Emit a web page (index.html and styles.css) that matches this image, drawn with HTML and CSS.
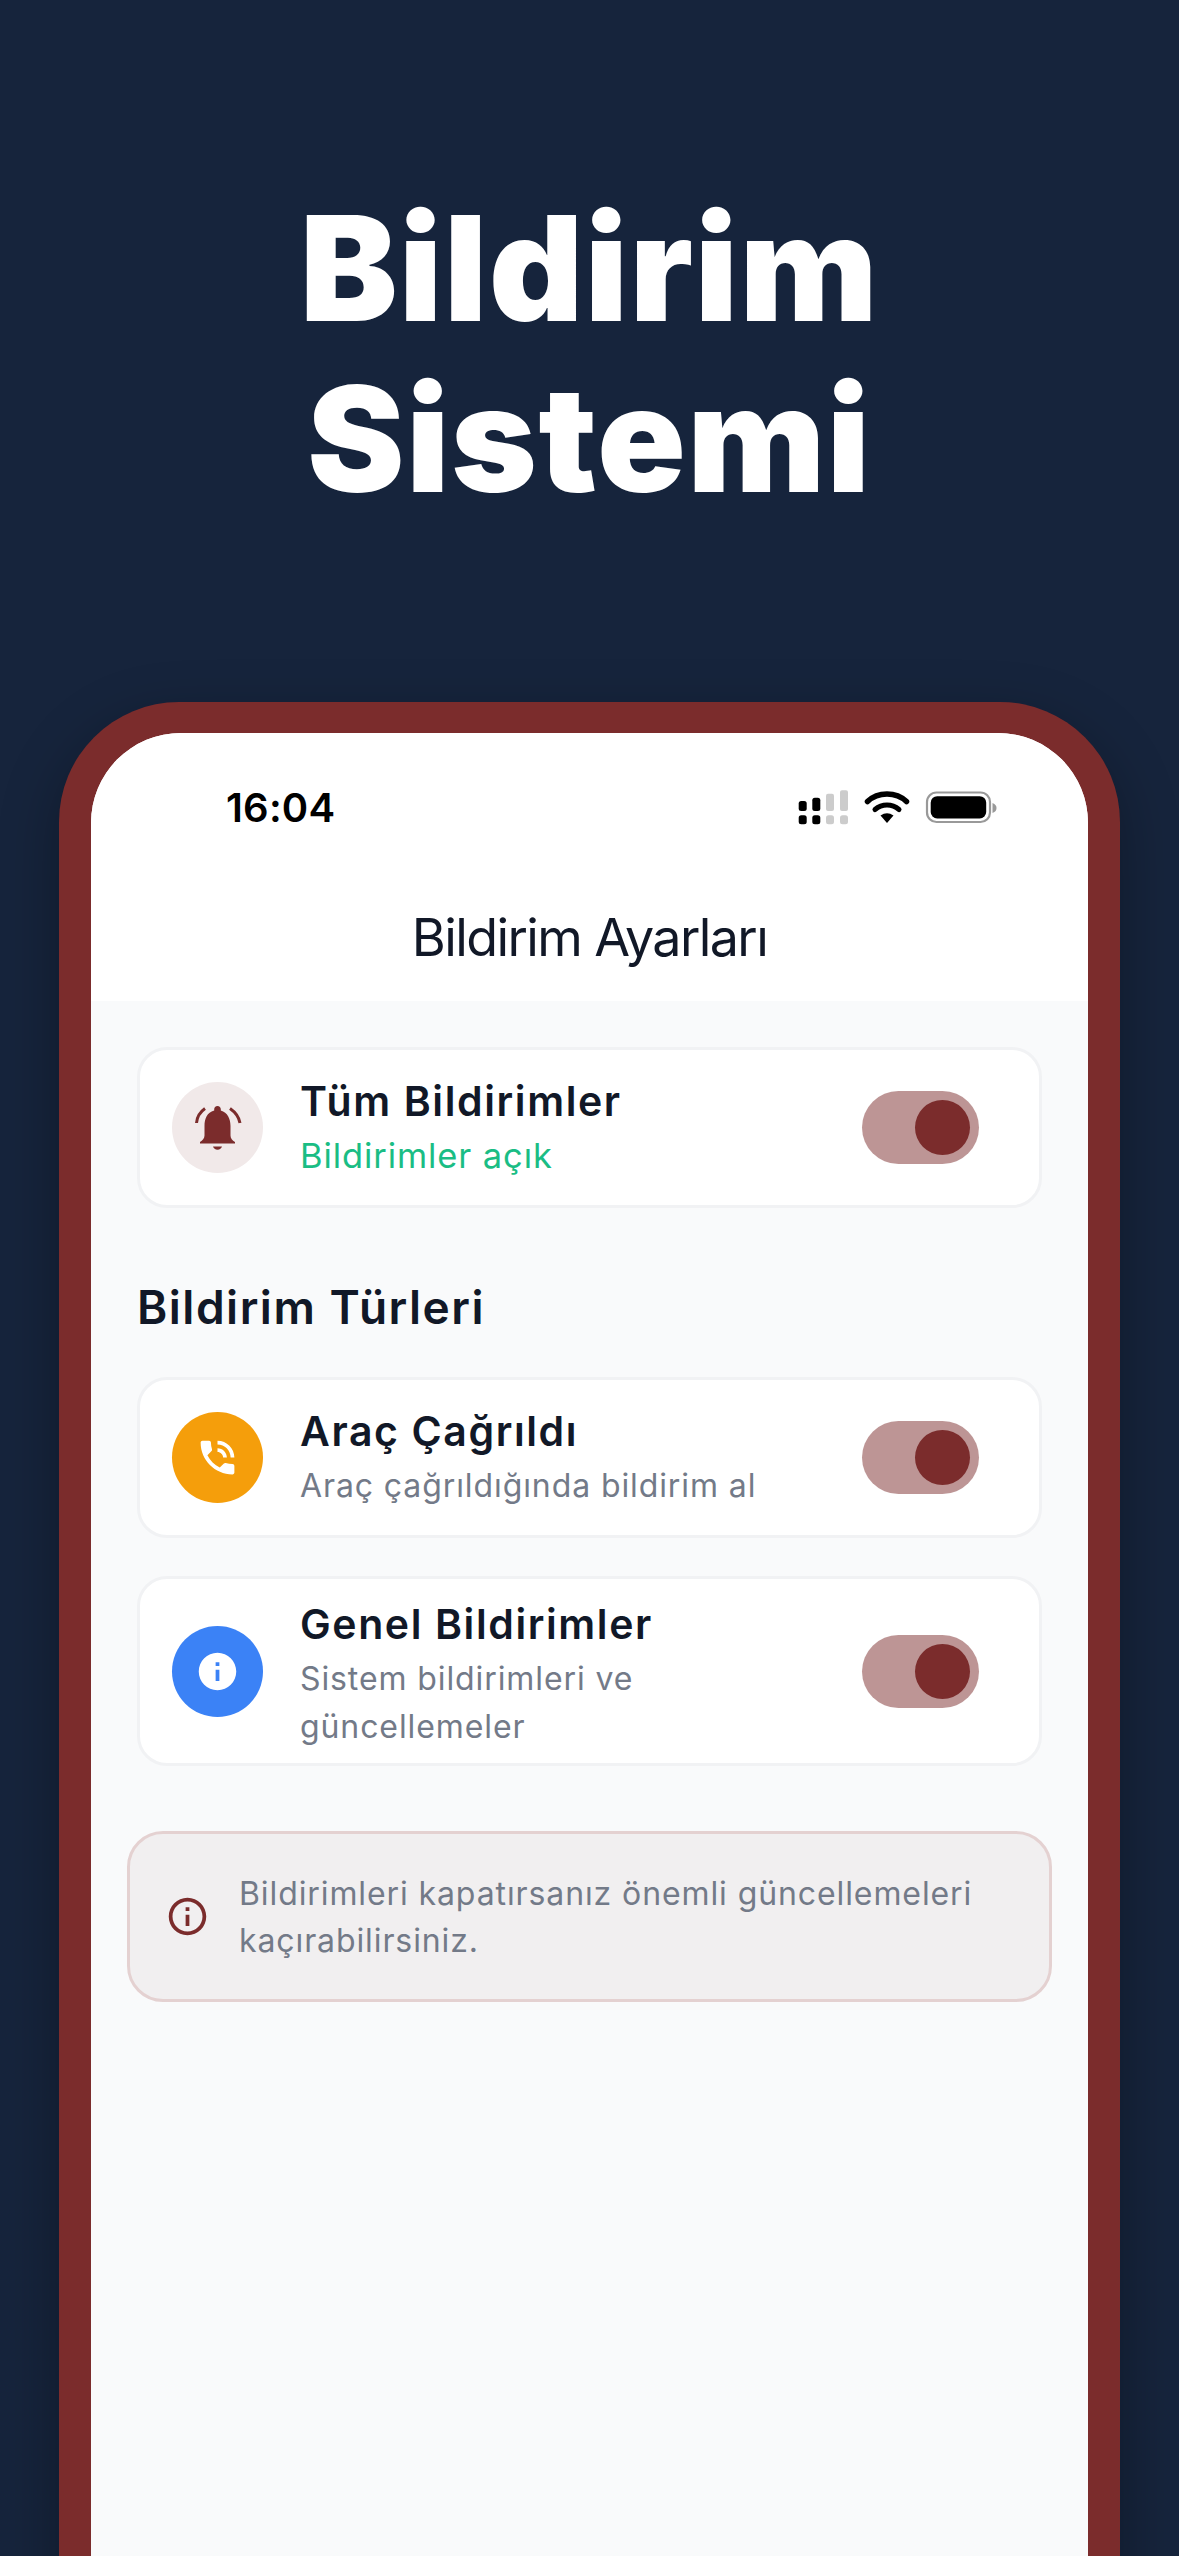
FILE: index.html
```html
<!DOCTYPE html>
<html lang="tr">
<head>
    <meta charset="UTF-8">
    <meta name="viewport" content="width=device-width, initial-scale=1.0">
    <title>Bildirim Sistemi</title>
    <link rel="stylesheet" href="styles.css">
</head>
<body>
    <div class="page">
        <h1 class="headline">Bildirim<br>Sistemi</h1>

        <div class="phone">
            <div class="screen">
                <div class="status-bar">
                    <span class="status-time">16:04</span>
                    <svg class="status-icons" width="260" height="70" viewBox="0 0 260 70">
                        <rect x="38.7" y="30" width="8" height="10" rx="2.5"/>
                        <rect x="52.3" y="26.7" width="8" height="13.3" rx="2.5"/>
                        <rect x="66" y="22.7" width="8" height="17.3" rx="2" fill="#ccc"/>
                        <rect x="80" y="19.3" width="8" height="20.7" rx="2" fill="#ccc"/>
                        <rect x="38.7" y="44.3" width="8" height="9" rx="2.5"/>
                        <rect x="52.3" y="44.3" width="8" height="9" rx="2.5"/>
                        <rect x="66" y="44.3" width="8" height="9" rx="2.5" fill="#ccc"/>
                        <rect x="80" y="44.3" width="8" height="9" rx="2.5" fill="#ccc"/>
                        <path d="M107.5 30.5 C118 20.5 136 20.5 146.5 30.5" fill="none" stroke="#000" stroke-width="5.5" stroke-linecap="round"/>
                        <path d="M115 38.5 C122 32.5 132 32.5 139 38.5" fill="none" stroke="#000" stroke-width="5" stroke-linecap="round"/>
                        <path d="M120.5 44.5 Q127 40 133.5 44.5 L127 52 Z"/>
                        <rect x="167" y="21.5" width="63" height="29.5" rx="9.5" fill="none" stroke="#999" stroke-width="2.2"/>
                        <rect x="170.7" y="25.2" width="55.5" height="22.3" rx="6.5"/>
                        <path d="M232.5 32 C235.5 33 236.5 35 236.5 37 C236.5 39 235.5 41 232.5 42 Z" fill="#999"/>
                    </svg>
                </div>

                <div class="nav-title">Bildirim Ayarları</div>

                <div class="content">
                    <div class="card">
                        <div class="card-icon icon-bell">
                            <svg width="75" height="75" viewBox="0 0 75 75" fill="#7b2c2c">
                                <path d="M37.5 16c-2 0-3.3 1.4-3.3 3.2v1.4C27 22.5 24.5 29 24.5 36v9.5c0 3-2 5-4.5 6.5v1.5h35V52c-2.7-1.5-4.5-3.5-4.5-6.5V36c0-7-3-13.5-9.7-15.400v-1.400c0-1.800-1.300-3.200-3.300-3.200z"/>
                                <path d="M33 56.500h9c-.5 2-2.300 3.200-4.500 3.200s-4-1.200-4.500-3.200z"/>
                                <path d="M25 18.500C20 22 17 27 16.500 33M50 18.500C55 22 59 27 60 33" fill="none" stroke="#7b2c2c" stroke-width="3"/>
                            </svg>
                        </div>
                        <div class="card-text">
                            <div class="card-title">Tüm Bildirimler</div>
                            <div class="card-sub card-sub-on">Bildirimler açık</div>
                        </div>
                        <div class="toggle"><span class="knob"></span></div>
                    </div>

                    <h2 class="section-title">Bildirim Türleri</h2>

                    <div class="card">
                        <div class="card-icon icon-call">
                            <svg width="45" height="45" viewBox="0 0 24 24" fill="#fff">
                                <path d="M20 15.500c-1.250 0-2.450-.2-3.570-.57-.35-.11-.74-.03-1.020.24l-2.200 2.200c-2.830-1.440-5.150-3.750-6.590-6.590l2.200-2.210c.28-.26.36-.65.25-1C8.700 6.450 8.500 5.250 8.500 4c0-.55-.45-1-1-1H4c-.55 0-1 .45-1 1 0 9.390 7.610 17 17 17 .55 0 1-.45 1-1v-3.500c0-.55-.45-1-1-1zM19 12h2c0-4.970-4.030-9-9-9v2c3.870 0 7 3.130 7 7zm-4 0h2c0-2.760-2.240-5-5-5v2c1.660 0 3 1.340 3 3z"/>
                            </svg>
                        </div>
                        <div class="card-text">
                            <div class="card-title">Araç Çağrıldı</div>
                            <div class="card-sub">Araç çağrıldığında bildirim al</div>
                        </div>
                        <div class="toggle"><span class="knob"></span></div>
                    </div>

                    <div class="card card-tall">
                        <div class="card-icon icon-info">
                            <svg width="45" height="45" viewBox="0 0 24 24" fill="#fff">
                                <path d="M12 2C6.480 2 2 6.480 2 12s4.480 10 10 10 10-4.480 10-10S17.520 2 12 2zm1 15h-2v-6h2v6zm0-8h-2V7h2v2z"/>
                            </svg>
                        </div>
                        <div class="card-text">
                            <div class="card-title">Genel Bildirimler</div>
                            <div class="card-sub">Sistem bildirimleri ve güncellemeler</div>
                        </div>
                        <div class="toggle"><span class="knob"></span></div>
                    </div>

                    <div class="notice">
                        <svg class="notice-icon" width="45" height="45" viewBox="0 0 24 24" fill="#7b2c2c">
                            <path d="M11 7h2v2h-2zm0 4h2v6h-2zm1-9C6.480 2 2 6.480 2 12s4.480 10 10 10 10-4.480 10-10S17.520 2 12 2zm0 18c-4.410 0-8-3.590-8-8s3.590-8 8-8 8 3.590 8 8-3.590 8-8 8z"/>
                        </svg>
                        <p class="notice-text">Bildirimleri kapatırsanız önemli güncellemeleri kaçırabilirsiniz.</p>
                    </div>
                </div>
            </div>
        </div>
    </div>
</body>
</html>
```
FILE: styles.css
```css
:root {
    --navy: #16243c;
    --maroon: #7b2c2c;
    --text-color: #111827;
    --muted-text-color: #737a88;
    --card-border: #f1f2f4;
}

body {
    margin: 0;
    font-family: Inter, "Noto Sans", sans-serif;
    background-color: var(--navy);
}

.page {
    display: flex;
    flex-direction: column;
    align-items: flex-start;

    box-sizing: border-box;
    width: 1179px;
    height: 2556px;
    overflow: hidden;
    background-color: var(--navy);
}

.headline {
    align-self: center;
    margin: 183px 0 0 0;
    font-size: 146px;
    font-weight: 900;
    line-height: 171px;
    letter-spacing: 1.7px;
    text-align: center;
    color: white;
}

.phone {
    flex: 0 0 auto;
    box-sizing: border-box;
    width: 1061px;
    height: 1900px;
    margin: 177px 0 0 59px;
    padding: 31px 32px 0 32px;

    background-color: var(--maroon);
    border-radius: 120px 120px 0 0;
    box-shadow: 0 20px 60px rgba(0, 0, 0, 0.3);
}

.screen {
    height: 100%;
    overflow: hidden;
    background-color: #f9fafb;
    border-radius: 90px 90px 0 0;
}

.status-bar {
    display: flex;
    align-items: center;
    justify-content: space-between;

    box-sizing: border-box;
    height: 146px;
    padding: 0 68px 0 135px;
    background-color: white;
}

.status-time {
    font-size: 40px;
    font-weight: 600;
    letter-spacing: 0.2px;
    color: black;
    padding-top: 2px;
}

.nav-title {
    box-sizing: border-box;
    height: 122px;
    padding-top: 25px;

    font-size: 52px;
    font-weight: 400;
    line-height: 68px;
    letter-spacing: -1.6px;
    text-align: center;
    color: var(--text-color);
    background-color: white;
}

.content {
    display: flex;
    flex-direction: column;
    padding: 46px 46px 0 46px;
}

.card {
    display: flex;
    align-items: center;

    box-sizing: border-box;
    min-height: 161px;
    padding: 16px 60px 16px 32px;

    background-color: white;
    border: 3px solid var(--card-border);
    border-radius: 30px;
}

.card + .card {
    margin-top: 38px;
}

.card-icon {
    display: flex;
    align-items: center;
    justify-content: center;

    flex: 0 0 auto;
    width: 91px;
    height: 91px;
    border-radius: 50%;
}

.icon-bell {
    background-color: #f1e9e9;
}

.icon-call {
    background-color: #f59e0b;
}

.icon-info {
    background-color: #3b82f6;
}

.card-text {
    flex: 1;
    margin: -2px 50px 0 37px;
}

.card-tall .card-text {
    margin-top: 1px;
    margin-bottom: -4px;
}

.card-title {
    font-size: 41px;
    font-weight: 600;
    line-height: 56px;
    letter-spacing: 1.6px;
    color: var(--text-color);
}

.card-sub {
    font-size: 32px;
    font-weight: 400;
    line-height: 48px;
    letter-spacing: 0.9px;
    color: var(--muted-text-color);
    margin-top: 3px;
}

.card-sub-on {
    font-size: 34.5px;
    color: #1abd84;
}

.toggle {
    display: flex;
    align-items: center;
    justify-content: flex-end;

    flex: 0 0 auto;
    box-sizing: border-box;
    width: 117px;
    height: 73px;
    padding-right: 9px;

    background-color: rgba(123, 44, 44, 0.5);
    border-radius: 37px;
}

.knob {
    width: 55px;
    height: 55px;
    background-color: var(--maroon);
    border-radius: 50%;
}

.section-title {
    margin: 77px 0 47px 0;
    font-size: 46px;
    font-weight: 600;
    line-height: 45px;
    letter-spacing: 1.5px;
    color: var(--text-color);
}

.notice {
    display: flex;
    align-items: center;
    gap: 29px;

    box-sizing: border-box;
    height: 171px;
    margin: 65px -10px 0 -10px;
    padding: 0 30px 0 35px;

    background-color: #f1eff0;
    border: 3px solid #e4d1d1;
    border-radius: 36px;
}

.notice-icon {
    flex: 0 0 auto;
}

.notice-text {
    margin: 0;
    font-size: 32px;
    line-height: 47px;
    letter-spacing: 0.9px;
    color: var(--muted-text-color);
}
```
